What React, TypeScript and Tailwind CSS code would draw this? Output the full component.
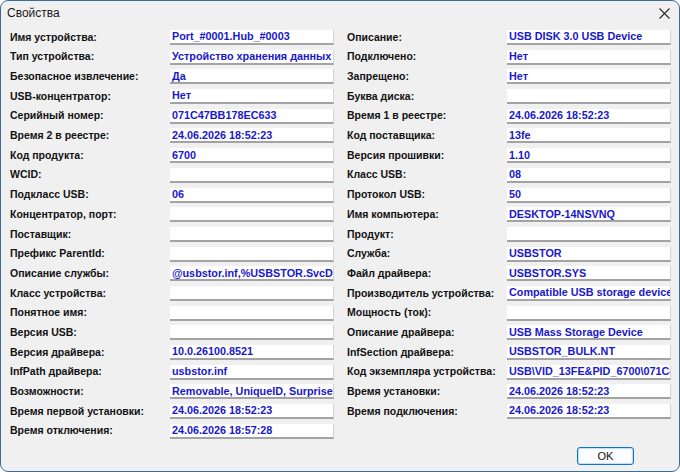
const left: [string, string][] = [
  ["Имя устройства:", "Port_#0001.Hub_#0003"],
  ["Тип устройства:", "Устройство хранения данных"],
  ["Безопасное извлечение:", "Да"],
  ["USB-концентратор:", "Нет"],
  ["Серийный номер:", "071C47BB178EC633"],
  ["Время 2 в реестре:", "24.06.2026 18:52:23"],
  ["Код продукта:", "6700"],
  ["WCID:", ""],
  ["Подкласс USB:", "06"],
  ["Концентратор, порт:", ""],
  ["Поставщик:", ""],
  ["Префикс ParentId:", ""],
  ["Описание службы:", "@usbstor.inf,%USBSTOR.SvcDesc%;USB Mass Storage Driver"],
  ["Класс устройства:", ""],
  ["Понятное имя:", ""],
  ["Версия USB:", ""],
  ["Версия драйвера:", "10.0.26100.8521"],
  ["InfPath драйвера:", "usbstor.inf"],
  ["Возможности:", "Removable, UniqueID, SurpriseRemovalOK"],
  ["Время первой установки:", "24.06.2026 18:52:23"],
  ["Время отключения:", "24.06.2026 18:57:28"],
];

const right: [string, string][] = [
  ["Описание:", "USB DISK 3.0 USB Device"],
  ["Подключено:", "Нет"],
  ["Запрещено:", "Нет"],
  ["Буква диска:", ""],
  ["Время 1 в реестре:", "24.06.2026 18:52:23"],
  ["Код поставщика:", "13fe"],
  ["Версия прошивки:", "1.10"],
  ["Класс USB:", "08"],
  ["Протокол USB:", "50"],
  ["Имя компьютера:", "DESKTOP-14NSVNQ"],
  ["Продукт:", ""],
  ["Служба:", "USBSTOR"],
  ["Файл драйвера:", "USBSTOR.SYS"],
  ["Производитель устройства:", "Compatible USB storage device"],
  ["Мощность (ток):", ""],
  ["Описание драйвера:", "USB Mass Storage Device"],
  ["InfSection драйвера:", "USBSTOR_BULK.NT"],
  ["Код экземпляра устройства:", "USB\\VID_13FE&PID_6700\\071C47BB178EC633"],
  ["Время установки:", "24.06.2026 18:52:23"],
  ["Время подключения:", "24.06.2026 18:52:23"],
];

function Row({ label, value }: { label: string; value: string }) {
  return (
    <div className="flex h-[19.7px] items-start">
      <div className="w-[160px] shrink-0 h-[15px] flex items-center text-[10.5px] font-bold text-[#111] whitespace-nowrap">
        {label}
      </div>
      <div className="w-[164px] h-[15px] bg-white border-b-2 border-b-[#a3a3a3] border-r border-r-[#d4d4d4] overflow-hidden flex items-center pl-[2px] text-[10.8px] font-bold text-[#1818cc] whitespace-nowrap">
        {value}
      </div>
    </div>
  );
}

export default function App() {
  return (
    <div
      className="w-[680px] h-[472px] bg-[#f0f0f0] border border-[#3d6c98] rounded-[8px] overflow-hidden flex flex-col"
      style={{ fontFamily: '"Liberation Sans", Arial, sans-serif' }}
    >
      {/* title bar */}
      <div className="h-[23px] shrink-0 flex items-center justify-between pl-[6px] pr-[9px]">
        <span className="text-[12px] text-[#1a1a1a]">Свойства</span>
        <svg width="11" height="11" viewBox="0 0 11 11" className="mt-[1px]">
          <path d="M0.5 0.5 L10.5 10.5 M10.5 0.5 L0.5 10.5" stroke="#2a2a2a" strokeWidth="1.1" />
        </svg>
      </div>

      {/* property grid */}
      <div className="flex gap-[13px] pl-[9px] pt-[6px]">
        <div className="flex flex-col">
          {left.map(([l, v]) => (
            <Row key={l} label={l} value={v} />
          ))}
        </div>
        <div className="flex flex-col">
          {right.map(([l, v]) => (
            <Row key={l} label={l} value={v} />
          ))}
        </div>
      </div>

      <div className="flex-1" />

      {/* footer */}
      <div className="flex justify-end pr-[45px] pb-[6px]">
        <button className="w-[57px] h-[18px] rounded-[3px] border border-[#0a74d4] bg-[#fdfdfd] shadow-[inset_0_0_0_1px_#bfe0f8] text-[11px] text-[#111] flex items-center justify-center">
          OK
        </button>
      </div>
    </div>
  );
}
